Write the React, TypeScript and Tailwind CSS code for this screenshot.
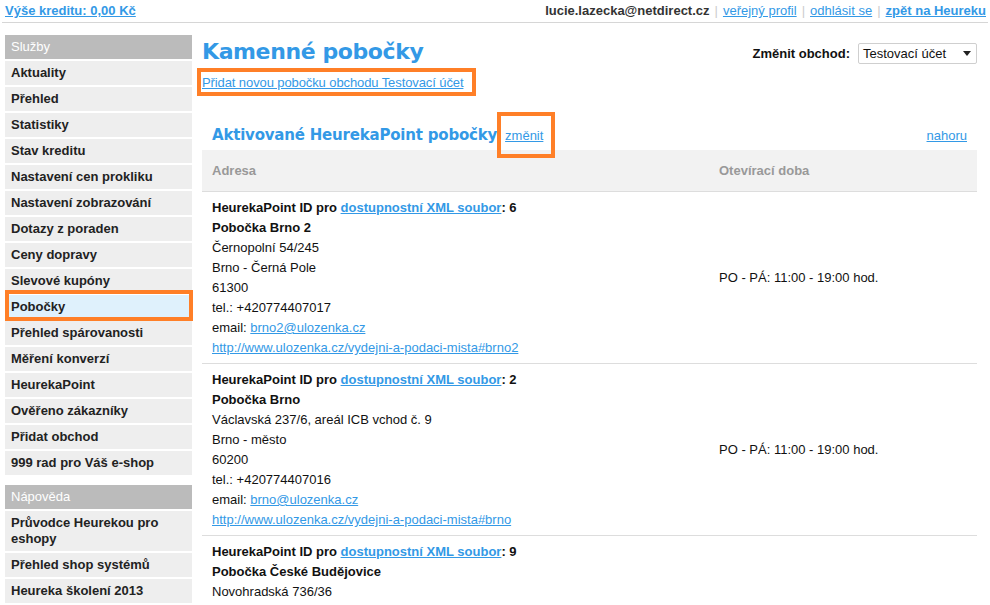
import React from 'react';

const services = [
  'Aktuality',
  'Přehled',
  'Statistiky',
  'Stav kreditu',
  'Nastavení cen prokliku',
  'Nastavení zobrazování',
  'Dotazy z poraden',
  'Ceny dopravy',
  'Slevové kupóny',
  'Pobočky',
  'Přehled spárovanosti',
  'Měření konverzí',
  'HeurekaPoint',
  'Ověřeno zákazníky',
  'Přidat obchod',
  '999 rad pro Váš e-shop',
];

const help = ['Průvodce Heurekou pro eshopy', 'Přehled shop systémů', 'Heureka školení 2013'];

type Branch = {
  id: number;
  name: string;
  street: string;
  city?: string;
  zip?: string;
  tel?: string;
  email?: string;
  url?: string;
};

// the third branch runs off the bottom of the window, only its top lines are visible
const branches: Branch[] = [
  {
    id: 6,
    name: 'Pobočka Brno 2',
    street: 'Černopolní 54/245',
    city: 'Brno - Černá Pole',
    zip: '61300',
    tel: '+420774407017',
    email: 'brno2@ulozenka.cz',
    url: 'http://www.ulozenka.cz/vydejni-a-podaci-mista#brno2',
  },
  {
    id: 2,
    name: 'Pobočka Brno',
    street: 'Václavská 237/6, areál ICB vchod č. 9',
    city: 'Brno - město',
    zip: '60200',
    tel: '+420774407016',
    email: 'brno@ulozenka.cz',
    url: 'http://www.ulozenka.cz/vydejni-a-podaci-mista#brno',
  },
  {
    id: 9,
    name: 'Pobočka České Budějovice',
    street: 'Novohradská 736/36',
  },
];

const link = 'text-[#3399e6] underline';
const heading = "font-['DejaVu_Sans',Verdana,sans-serif] font-bold text-[#3399e6]";

function SideItem({ label, active }: { label: string; active?: boolean }) {
  return (
    <div
      className={`relative mt-[2px] min-h-[24px] py-[4px] pl-[6px] pr-2 font-bold leading-[16px] text-[#222] ${
        active ? 'bg-[#dff1fc]' : 'bg-[#eeeeee]'
      }`}
    >
      {label}
      {active && (
        <div className="absolute left-0 -right-px -top-[5px] -bottom-[2px] border-4 border-[#ff7f27]" />
      )}
    </div>
  );
}

export default function App() {
  return (
    <div className="w-[990px] h-[605px] overflow-hidden bg-white font-['Liberation_Sans',Arial,sans-serif] text-[13px] text-[#111]">
      {/* ── Top bar ─────────────────────────────────────────── */}
      <div className="mx-[2px] flex h-[23px] items-center justify-between border-b border-[#d6d6d6] pl-[3px] pr-[2px]">
        <a className={`${link} font-bold`}>Výše kreditu: 0,00 Kč</a>
        <div className="flex items-center gap-[5px]">
          <span className="font-bold text-[#333]">lucie.lazecka@netdirect.cz</span>
          <span className="text-[#ccc]">|</span>
          <a className={link}>veřejný profil</a>
          <span className="text-[#ccc]">|</span>
          <a className={link}>odhlásit se</a>
          <span className="text-[#ccc]">|</span>
          <a className={`${link} font-bold`}>zpět na Heureku</a>
        </div>
      </div>

      <div className="flex pt-[10px]">
        {/* ── Sidebar ───────────────────────────────────────── */}
        <div className="ml-[5px] mt-[2px] w-[187px] shrink-0">
          <div className="h-[24px] bg-[#bbbbbb] pl-[6px] leading-[24px] text-white">Služby</div>
          {services.map((s) => (
            <SideItem key={s} label={s} active={s === 'Pobočky'} />
          ))}
          <div className="mt-[10px] h-[24px] bg-[#bbbbbb] pl-[6px] leading-[24px] text-white">Nápověda</div>
          {help.map((s) => (
            <SideItem key={s} label={s} />
          ))}
        </div>

        {/* ── Main ──────────────────────────────────────────── */}
        <div className="ml-[10px] w-[775px]">
          <div className="flex items-start justify-between">
            <h1 className={`${heading} mt-[4px] text-[22px] leading-[30px] tracking-[-0.4px]`}>Kamenné pobočky</h1>
            <div className="mt-[10px] flex items-center gap-[8px]">
              <span className="font-bold">Změnit obchod:</span>
              <div className="flex h-[21px] w-[119px] items-center justify-between rounded-[2px] border border-[#cfcfcf] px-[4px]">
                <span>Testovací účet</span>
                <svg width="8" height="5" viewBox="0 0 8 5" className="mr-[1px]">
                  <path d="M0 0h8L4 5z" fill="#222" />
                </svg>
              </div>
            </div>
          </div>

          <div className="-ml-[5px] mt-[1px] inline-block border-4 border-[#ff7f27] pt-[1px] pl-[1px] pr-[9px] leading-[19px] tracking-[-0.1px]">
            <a className={link}>Přidat novou pobočku obchodu Testovací účet</a>
          </div>

          {/* section header */}
          <div className="mt-[26px] flex items-end justify-between pl-[10px] pr-[10px]">
            <div className="flex items-end">
              <h2 className={`${heading} text-[15px] leading-[26px] tracking-[-0.2px]`}>Aktivované HeurekaPoint pobočky</h2>
              <div className="relative ml-[8px] pb-[3px]">
                <a className={link}>změnit</a>
                <div className="absolute -left-[8px] -right-[12px] -top-[14px] -bottom-[10px] border-4 border-[#ff7f27]" />
              </div>
            </div>
            <a className={`${link} pb-[3px]`}>nahoru</a>
          </div>

          {/* table */}
          <div className="mt-[2px]">
            <div className="flex h-[42px] items-center border-b border-[#dddddd] bg-[#f2f2f2] font-bold text-[#999]">
              <div className="w-[507px] pl-[10px]">Adresa</div>
              <div className="pl-[10px]">Otevírací doba</div>
            </div>
            {branches.map((b) => (
              <div key={b.id} className="flex items-center border-b border-[#dddddd] pt-[6px] pb-[5px] leading-[20px]">
                <div className="w-[507px] pl-[10px]">
                  <div className="font-bold">
                    HeurekaPoint ID pro <a className={link}>dostupnostní XML soubor</a>: {b.id}
                  </div>
                  <div className="font-bold">{b.name}</div>
                  <div>{b.street}</div>
                  {b.city && <div>{b.city}</div>}
                  {b.zip && <div>{b.zip}</div>}
                  {b.tel && <div>tel.: {b.tel}</div>}
                  {b.email && (
                    <div>
                      email: <a className={link}>{b.email}</a>
                    </div>
                  )}
                  {b.url && (
                    <div>
                      <a className={link}>{b.url}</a>
                    </div>
                  )}
                </div>
                {b.city && <div className="pl-[10px]">PO - PÁ: 11:00 - 19:00 hod.</div>}
              </div>
            ))}
          </div>
        </div>
      </div>
    </div>
  );
}
